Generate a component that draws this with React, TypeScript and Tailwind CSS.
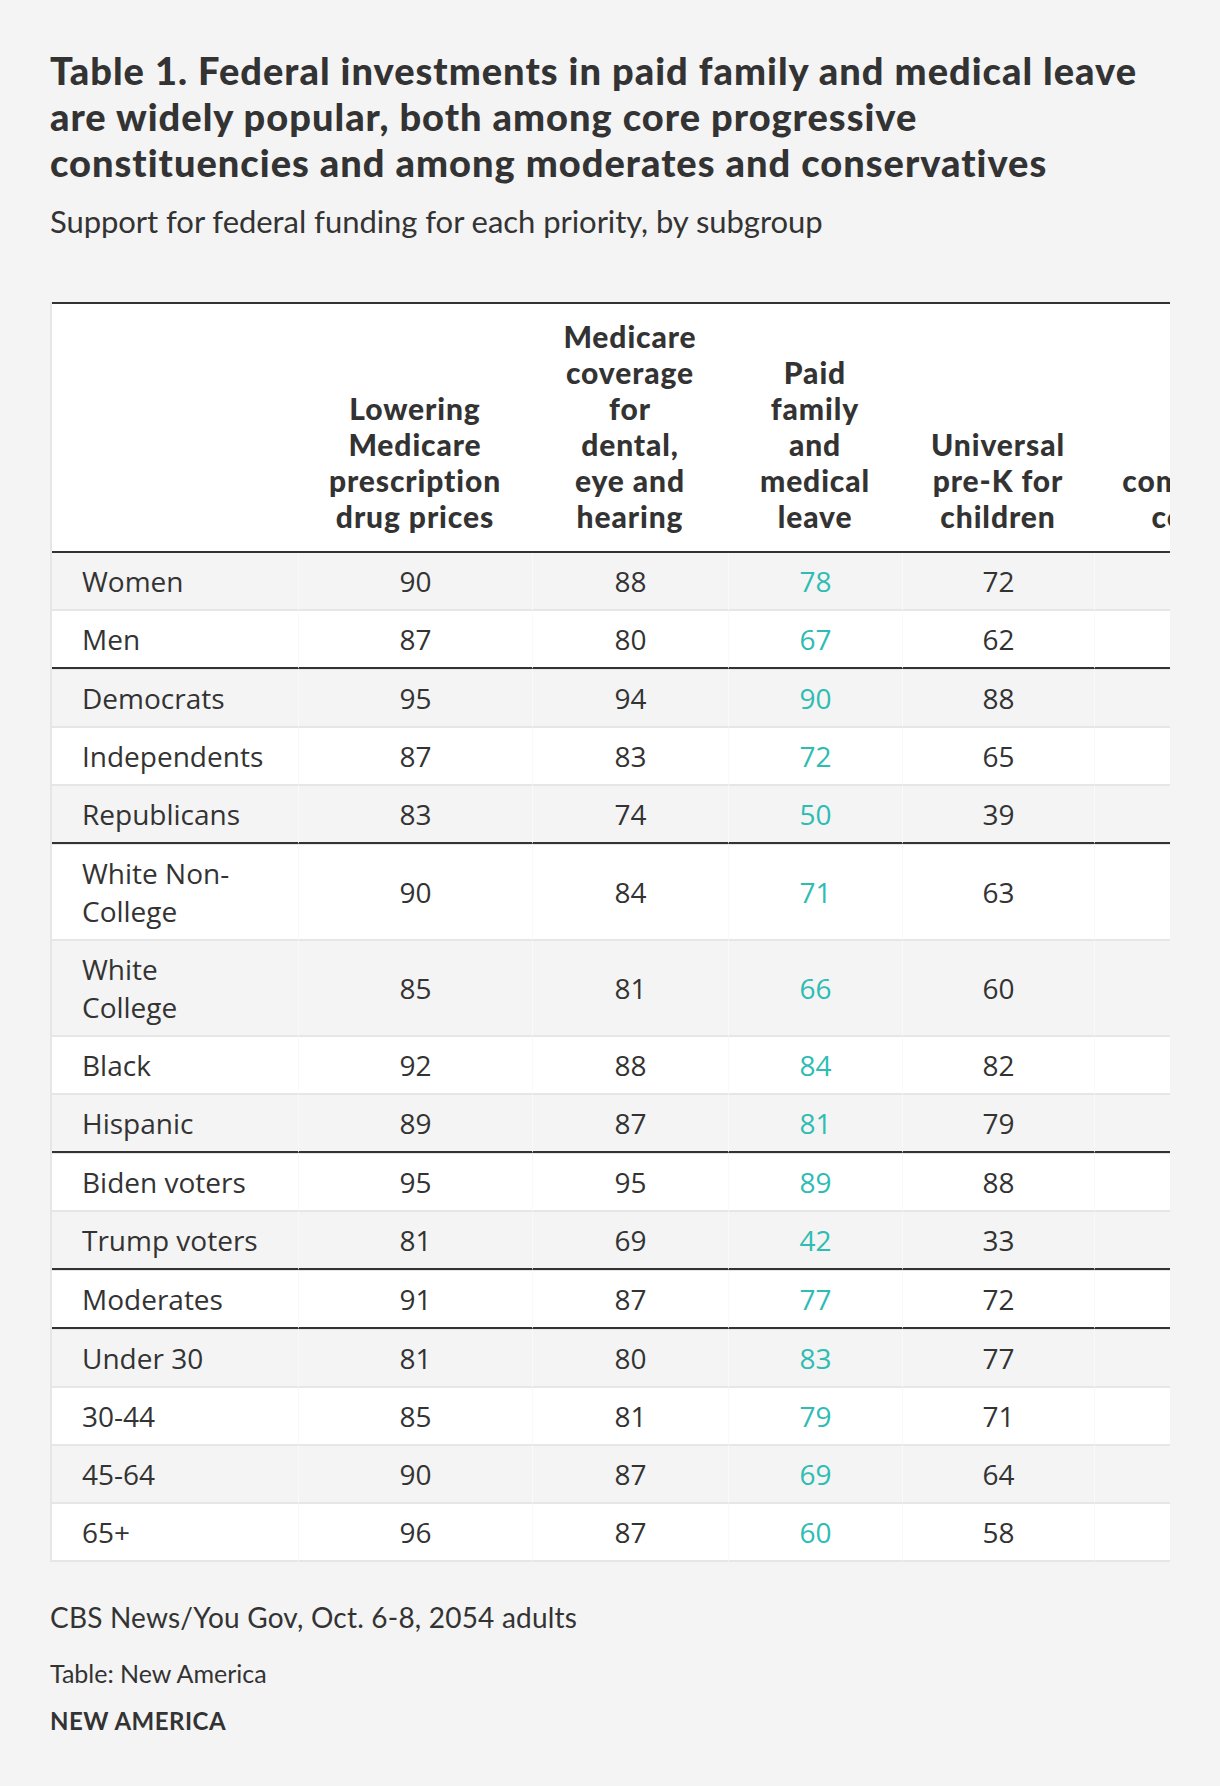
import React from "react";

type Row = { label: string[]; v: number[]; end?: boolean };

const rows: Row[] = [
  { label: ["Women"], v: [90, 88, 78, 72, 70] },
  { label: ["Men"], v: [87, 80, 67, 62, 61], end: true },
  { label: ["Democrats"], v: [95, 94, 90, 88, 86] },
  { label: ["Independents"], v: [87, 83, 72, 65, 63] },
  { label: ["Republicans"], v: [83, 74, 50, 39, 44], end: true },
  { label: ["White Non-", "College"], v: [90, 84, 71, 63, 60] },
  { label: ["White", "College"], v: [85, 81, 66, 60, 58] },
  { label: ["Black"], v: [92, 88, 84, 82, 84] },
  { label: ["Hispanic"], v: [89, 87, 81, 79, 78], end: true },
  { label: ["Biden voters"], v: [95, 95, 89, 88, 86] },
  { label: ["Trump voters"], v: [81, 69, 42, 33, 38], end: true },
  { label: ["Moderates"], v: [91, 87, 77, 72, 70], end: true },
  { label: ["Under 30"], v: [81, 80, 83, 77, 79] },
  { label: ["30-44"], v: [85, 81, 79, 71, 70] },
  { label: ["45-64"], v: [90, 87, 69, 64, 63] },
  { label: ["65+"], v: [96, 87, 60, 58, 60] },
];

const headers: string[][] = [
  ["Lowering", "Medicare", "prescription", "drug prices"],
  ["Medicare", "coverage", "for", "dental,", "eye and", "hearing"],
  ["Paid", "family", "and", "medical", "leave"],
  ["Universal", "pre-K for", "children"],
  ["Free", "community", "college"],
];

const colWidths = [246, 234, 196, 174, 192, 216];

export default function App() {
  return (
    <div className="min-h-[1786px] bg-[#f4f4f4] text-[#333] px-[50px] pt-[47px] font-[Lato,sans-serif]">
      <h1 className="text-[38px] leading-[46px] font-black tracking-[1px] whitespace-nowrap">
        Table 1. Federal investments in paid family and medical leave
        <br />
        are widely popular, both among core progressive
        <br />
        constituencies and among moderates and conservatives
      </h1>
      <p className="mt-[16px] text-[31px] leading-[40px] tracking-[-0.05px]">
        Support for federal funding for each priority, by subgroup
      </p>

      <div className="mt-[61px] w-[1120px] overflow-hidden border-l-2 border-[#e6e6e6]">
        <table className="table-fixed border-separate border-spacing-0 w-[1258px]">
          <colgroup>
            {colWidths.map((w, i) => (
              <col key={i} style={{ width: w }} />
            ))}
          </colgroup>
          <thead>
            <tr>
              <th className="bg-white border-t-2 border-b-2 border-[#333]"></th>
              {headers.map((h, i) => (
                <th
                  key={i}
                  className="bg-white border-t-2 border-b-2 border-[#333] align-bottom pt-[14px] pb-[17px] text-[30px] leading-[36px] font-black tracking-[0.9px] text-center whitespace-nowrap"
                >
                  {h.map((l, j) => (
                    <div key={j}>{l}</div>
                  ))}
                </th>
              ))}
            </tr>
          </thead>
          <tbody>
            {rows.map((r, i) => {
              const bg = i % 2 === 0 ? "bg-[#f4f4f4]" : "bg-white";
              const bb = r.end ? "border-b-[#333]" : "border-b-[#e6e6e6]";
              const afterEnd = i > 0 && rows[i - 1].end;
              const bt = afterEnd ? "border-t border-t-[#e6e6e6]" : "";
              return (
                <tr key={i}>
                  <td
                    className={`${bg} ${bb} ${bt} border-b-2 pl-[30px] py-[9px] text-[28px] leading-[38px] whitespace-nowrap font-['Open_Sans',sans-serif]`}
                  >
                    {r.label.map((l, j) => (
                      <div key={j}>{l}</div>
                    ))}
                  </td>
                  {r.v.map((n, j) => (
                    <td
                      key={j}
                      className={`${bg} ${bb} ${bt} border-b-2 border-l border-l-[#f9f9f9] py-[9px] text-[28px] leading-[38px] text-center font-['Open_Sans',sans-serif] ${
                        j === 2 ? "text-[#2ebcb3]" : "text-[#333]"
                      }`}
                    >
                      {n}
                    </td>
                  ))}
                </tr>
              );
            })}
          </tbody>
        </table>
      </div>

      <p className="mt-[37px] text-[28px] leading-[36px] tracking-[0.2px]">
        CBS News/You Gov, Oct. 6-8, 2054 adults
      </p>
      <p className="mt-[23px] text-[25px] leading-[30px]">Table: New America</p>
      <p className="mt-[18px] text-[24px] leading-[30px] font-bold tracking-[0.5px]">NEW AMERICA</p>
    </div>
  );
}
